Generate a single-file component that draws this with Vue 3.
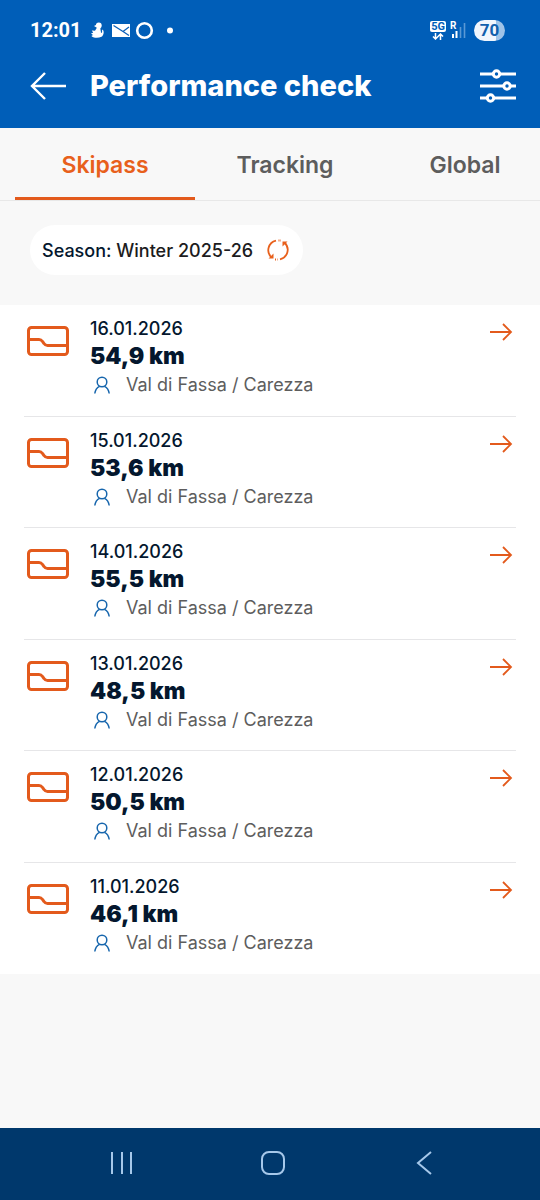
<script setup>
import { ref } from 'vue'

const tabs = ['Skipass', 'Tracking', 'Global']
const activeTab = ref('Skipass')

const days = [
  { date: '16.01.2026', distance: '54,9 km' },
  { date: '15.01.2026', distance: '53,6 km' },
  { date: '14.01.2026', distance: '55,5 km' },
  { date: '13.01.2026', distance: '48,5 km' },
  { date: '12.01.2026', distance: '50,5 km' },
  { date: '11.01.2026', distance: '46,1 km' },
]
const area = 'Val di Fassa / Carezza'
</script>

<template>
  <div class="page">
    <header class="top">
      <div class="status">
        <span class="clock">12:01</span>
        <svg class="notices" width="84" height="20" viewBox="0 0 84 20" fill="#fff" aria-hidden="true">
          <circle cx="8.800" cy="5.500" r="2.900" />
          <path d="M7 4.500L4 6L6.500 7.500Z" />
          <path d="M7 7.500H10.500C10 9 11 10.500 11 13L12 12.500C12.500 11.500 11.500 10.500 12.500 9.500C14.500 11 13.800 15.500 11.500 16.800C8.500 18.300 4 18.200 1.800 16.500C1.200 15.700 2.200 15.300 3.200 15.300L1 13.200L3.200 12.800L1.800 10.600L5 10.800Z" />
          <path d="M22 4H40V17H22Z" />
          <path d="M23.500 5.500L33 11.500L39 7M33 11.500L39 15.500" fill="none" stroke="#0b60b9" stroke-width="1.300" />
          <circle cx="54.500" cy="10.500" r="7.300" fill="none" stroke="#fff" stroke-width="2.600" />
          <circle cx="80" cy="10.500" r="3" />
        </svg>
        <div class="signals">
          <span class="network">
            <span class="badge">5G</span>
            <svg width="12" height="7" viewBox="0 0 12 7" fill="none" stroke="#fff" stroke-width="1.500" aria-hidden="true">
              <path d="M3.500 0V6M1 3.500L3.500 6L6 3.500M8.500 7V1M6 3.500L8.500 1L11 3.500" />
            </svg>
          </span>
          <span class="cell">
            <span class="roaming">R</span>
            <svg width="16" height="16" viewBox="0 0 16 16" aria-hidden="true">
              <path d="M3 12V16M6.500 9V16" stroke="#fff" stroke-width="2" />
              <path d="M10.500 5V16M14.500 1V16" stroke="#5a99d5" stroke-width="1.600" />
            </svg>
          </span>
          <span class="battery">70</span>
        </div>
      </div>
      <div class="bar">
        <button class="icon-button back" type="button" aria-label="Back">
          <svg width="38" height="30" viewBox="0 0 38 30" fill="none" stroke="#fff" stroke-width="2.400">
            <path d="M15 2L2 15L15 28M2 15H36" />
          </svg>
        </button>
        <h1>Performance check</h1>
        <button class="icon-button" type="button" aria-label="Filters">
          <svg width="36" height="34" viewBox="0 0 36 34" fill="none" stroke="#fff" stroke-width="3">
            <path d="M0 5H36M0 17H36M0 29H36" />
            <g fill="#005eb8">
              <circle cx="16.500" cy="5" r="3.200" />
              <circle cx="27" cy="17" r="3.200" />
              <circle cx="10.500" cy="29" r="3.200" />
            </g>
          </svg>
        </button>
      </div>
    </header>

    <nav class="tabs">
      <div class="track">
        <button
          v-for="tab in tabs"
          :key="tab"
          type="button"
          class="tab"
          :class="{ active: tab === activeTab }"
          @click="activeTab = tab"
        >{{ tab }}</button>
      </div>
    </nav>

    <main>
      <div class="filter">
        <button class="season" type="button">
          <span>Season: <strong>Winter 2025-26</strong></span>
          <svg width="22" height="22" viewBox="0 0 22 22" fill="none" stroke="#e8601c" stroke-width="1.800" aria-hidden="true">
            <path d="M9 1.700C1.500 3.500 -1.500 12.500 4.500 18.500M13 20.300C20.500 18.500 23.500 9.500 17.500 3.500" />
            <path d="M1.500 19.500H6.500V14.500ZM20.500 2.500H15.500V7.500Z" fill="#e8601c" stroke="none" />
            <path d="M11.500 1.500H14M8 20.500H10.500" stroke-dasharray="1 1" />
          </svg>
        </button>
      </div>

      <ul class="list">
        <li v-for="day in days" :key="day.date" class="row">
          <svg class="pass" width="42" height="30" viewBox="0 0 42 30" fill="none" stroke="#e35a1c" stroke-width="3" aria-hidden="true">
            <rect x="1.500" y="1.500" width="39" height="27" rx="3" />
            <path d="M2 13.500H12C14 13.500 14.500 14 15.500 15.500L17 17.500C18 19 18.500 19.500 20.500 19.500H40" />
          </svg>
          <div class="details">
            <time class="date">{{ day.date }}</time>
            <span class="distance">{{ day.distance }}</span>
            <span class="area">
              <svg width="18" height="18" viewBox="0 0 18 18" fill="none" stroke="#1766ad" stroke-width="1.500" aria-hidden="true">
                <circle cx="9" cy="6" r="4.800" />
                <path d="M1.800 17.500C2.300 13.500 4.500 11.300 6.500 10.300M16.200 17.500C15.700 13.500 13.500 11.300 11.500 10.300" />
              </svg>
              {{ area }}
            </span>
          </div>
          <a class="open" href="#" :aria-label="'Open ' + day.date">
            <svg width="24" height="20" viewBox="0 0 24 20" fill="none" stroke="#e35a1c" stroke-width="1.800">
              <path d="M1 10H22M14 2L22 10L14 18" />
            </svg>
          </a>
        </li>
      </ul>
    </main>

    <footer class="system">
      <button class="icon-button" type="button" aria-label="Recent apps">
        <svg width="24" height="24" viewBox="0 0 24 24" stroke="#a6c8ea" stroke-width="2">
          <path d="M2 1V23M12 1V23M21 1V23" />
        </svg>
      </button>
      <button class="icon-button" type="button" aria-label="Home">
        <svg width="24" height="24" viewBox="0 0 24 24" fill="none" stroke="#a6c8ea" stroke-width="2">
          <rect x="1" y="1" width="22" height="22" rx="7" />
        </svg>
      </button>
      <button class="icon-button" type="button" aria-label="Go back">
        <svg width="24" height="24" viewBox="0 0 24 24" fill="none" stroke="#a6c8ea" stroke-width="2">
          <path d="M19 1L6 12L19 23" />
        </svg>
      </button>
    </footer>
  </div>
</template>

<style>
body {
  margin: 0;
  background: #f8f8f8;
}
</style>

<style scoped>
.page {
  display: flex;
  flex-direction: column;
  min-height: 100vh;
  font-family: Inter, "Liberation Sans", sans-serif;
  color: #04172e;
}

button {
  font: inherit;
  color: inherit;
  border: 0;
  background: none;
  padding: 0;
  cursor: pointer;
}

svg {
  display: block;
  flex: none;
}

.icon-button {
  display: flex;
}

.top {
  background: #005eb8;
  color: #fff;
  height: 128px;
  box-sizing: border-box;
  padding: 18px 24px 0 30px;
}

.status {
  display: flex;
  align-items: center;
  height: 24px;
}

.clock {
  font-family: Roboto, sans-serif;
  font-size: 20px;
  font-weight: 700;
}

.notices {
  margin-left: 8px;
}

.signals {
  display: flex;
  align-items: center;
  gap: 4px;
  margin-left: auto;
  margin-right: 11px;
}

.network {
  display: flex;
  flex-direction: column;
  align-items: center;
  gap: 1px;
}

.badge {
  padding: 0 1px;
  border-radius: 2px;
  background: #fff;
  color: #005eb8;
  font-family: Roboto, sans-serif;
  font-size: 11px;
  font-weight: 700;
  line-height: 11px;
}

.cell {
  position: relative;
}

.roaming {
  position: absolute;
  top: -2px;
  left: 0;
  font-family: Roboto, sans-serif;
  font-size: 10px;
  font-weight: 700;
  line-height: 12px;
}

.battery {
  width: 31px;
  margin-left: 4px;
  border-radius: 11px;
  background: linear-gradient(90deg, #f0f6fd 70%, #9fc3e8 70%);
  color: #1260ad;
  font-family: Roboto, sans-serif;
  font-size: 17px;
  font-weight: 700;
  line-height: 21px;
  text-align: center;
}

.bar {
  display: flex;
  align-items: center;
  margin-top: 25px;
}

h1 {
  flex: 1;
  margin: 0 0 0 22px;
  font-size: 29px;
  font-weight: 800;
  line-height: 38px;
}

.tabs {
  overflow: hidden;
  border-bottom: 1px solid #e8e8e8;
}

.track {
  display: grid;
  grid-template-columns: repeat(3, 1fr);
  width: 100%;
  margin-left: 15px;
}

.tab {
  height: 72px;
  padding-top: 4px;
  border-bottom: 3px solid transparent;
  color: #5d5d5d;
  font-size: 23px;
  font-weight: 600;
}

.tab.active {
  color: #e8601c;
  border-bottom-color: #e35a1c;
}

main {
  flex: 1;
}

.filter {
  display: flex;
  padding: 24px 30px 30px;
}

.season {
  display: flex;
  align-items: center;
  gap: 14px;
  height: 50px;
  padding: 0 14px 0 12px;
  border-radius: 25px;
  background: #fff;
  font-size: 18px;
  font-weight: 500;
}

.season strong {
  color: #1c1c20;
  font-weight: 500;
}

.list {
  display: grid;
  grid-auto-rows: 1fr;
  min-height: 669px;
  margin: 0;
  padding: 0 24px;
  background: #fff;
  list-style: none;
}

.row {
  display: flex;
  align-items: flex-start;
  padding: 12px 3px;
  border-bottom: 1px solid #e6e6e8;
}

.row:last-child {
  border-bottom-color: transparent;
}

.pass {
  margin-top: 9px;
}

.details {
  display: flex;
  flex: 1;
  flex-direction: column;
  margin-left: 21px;
}

.date {
  font-size: 18px;
  font-weight: 500;
  line-height: 24px;
}

.distance {
  font-size: 23px;
  font-weight: 900;
  line-height: 30px;
}

.area {
  display: flex;
  align-items: center;
  gap: 15px;
  padding-left: 3px;
  color: #5d5d5d;
  font-size: 18px;
  line-height: 28px;
}

.open {
  margin-top: 5px;
}

.system {
  display: flex;
  align-items: center;
  justify-content: space-between;
  height: 72px;
  box-sizing: border-box;
  padding: 0 104px 2px 110px;
  background: #00386c;
}
</style>
